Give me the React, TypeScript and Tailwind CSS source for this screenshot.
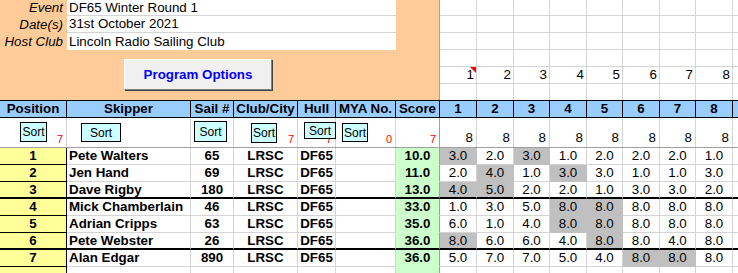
const META = [
  ["Event", "DF65 Winter Round 1"],
  ["Date(s)", "31st October 2021"],
  ["Host Club", "Lincoln Radio Sailing Club"],
];

const RACE_W = [
  "w-[37px]",
  "w-[37px]",
  "w-[36px]",
  "w-[37px]",
  "w-[36px]",
  "w-[37px]",
  "w-[36px]",
  "w-[37px]",
];

const ROWS = [
  { pos: 1, name: "Pete Walters", sail: 65, score: "10.0", races: [3, 2, 3, 1, 2, 2, 2, 1], drops: [0, 2] },
  { pos: 2, name: "Jen Hand", sail: 69, score: "11.0", races: [2, 4, 1, 3, 3, 1, 1, 3], drops: [1, 3] },
  { pos: 3, name: "Dave Rigby", sail: 180, score: "13.0", races: [4, 5, 2, 2, 1, 3, 3, 2], drops: [0, 1] },
  { pos: 4, name: "Mick Chamberlain", sail: 46, score: "33.0", races: [1, 3, 5, 8, 8, 8, 8, 8], drops: [3, 4] },
  { pos: 5, name: "Adrian Cripps", sail: 63, score: "35.0", races: [6, 1, 4, 8, 8, 8, 8, 8], drops: [3, 4] },
  { pos: 6, name: "Pete Webster", sail: 26, score: "36.0", races: [8, 6, 6, 4, 8, 8, 4, 8], drops: [0, 4] },
  { pos: 7, name: "Alan Edgar", sail: 890, score: "36.0", races: [5, 7, 7, 5, 4, 8, 8, 8], drops: [5, 6] },
];

const TOP_H = ["h-[16px]", "h-[17px]", "h-[17px]", "h-[17px]", "h-[17px]", "h-[16px]"];

function bottom(thick: boolean, normal: string) {
  return thick ? "border-b-2 border-b-black" : `border-b ${normal}`;
}

function SortBtn({ cls, top }: { cls: string; top?: boolean }) {
  return (
    <div
      className={`absolute flex justify-center border border-black bg-[#ccffff] text-[12px] leading-[14px] text-black ${
        top ? "items-start pt-[1px]" : "items-center"
      } ${cls}`}
    >
      Sort
    </div>
  );
}

function DataRow({ r, thick }: { r: (typeof ROWS)[number]; thick: boolean }) {
  const cell = "flex h-full shrink-0 items-center border-r";
  return (
    <div className="flex h-[17px]">
      <div className={`${cell} w-[67px] justify-center bg-[#ffff99] font-bold border-r-black ${bottom(thick, "border-b-black")}`}>
        {r.pos}
      </div>
      <div className={`${cell} w-[124px] pl-[2px] font-bold border-r-[#d4d4d4] ${bottom(thick, "border-b-[#d4d4d4]")}`}>
        {r.name}
      </div>
      <div className={`${cell} w-[43px] justify-center font-bold border-r-[#d4d4d4] ${bottom(thick, "border-b-[#d4d4d4]")}`}>
        {r.sail}
      </div>
      <div className={`${cell} w-[64px] justify-center font-bold border-r-[#d4d4d4] ${bottom(thick, "border-b-[#d4d4d4]")}`}>
        LRSC
      </div>
      <div className={`${cell} w-[38px] justify-center font-bold border-r-[#d4d4d4] ${bottom(thick, "border-b-[#d4d4d4]")}`}>
        DF65
      </div>
      <div className={`${cell} w-[60px] border-r-[#d4d4d4] ${bottom(thick, "border-b-[#d4d4d4]")}`} />
      <div className={`${cell} w-[44px] justify-center bg-[#ccffcc] font-bold border-r-[#a0a0a0] ${bottom(thick, "border-b-[#ccffcc]")}`}>
        {r.score}
      </div>
      {r.races.map((v, i) => {
        const drop = r.drops.includes(i);
        return (
          <div
            key={i}
            className={`${cell} ${RACE_W[i]} justify-center ${
              drop
                ? `bg-[#c0c0c0] border-r-[#c0c0c0] ${bottom(thick, "border-b-[#c0c0c0]")}`
                : `border-r-[#d4d4d4] ${bottom(thick, "border-b-[#d4d4d4]")}`
            }`}
          >
            {v.toFixed(1)}
          </div>
        );
      })}
      <div className={`${cell} flex-1 border-r-0 ${bottom(thick, "border-b-[#d4d4d4]")}`} />
    </div>
  );
}

export default function App() {
  const hd = "flex h-full shrink-0 items-center justify-center border-r border-r-black";
  const sc = "relative flex h-full shrink-0 items-end justify-end border-r pr-[3px] pb-[2px] text-[11px] leading-[12px] text-[#ff0000]";
  return (
    <div className="h-[273px] w-[738px] overflow-hidden bg-white font-['Liberation_Sans',Arial,sans-serif] text-[13.33px] leading-none text-black">
      {/* sheet heading block */}
      <div className="flex h-[100px]">
        <div className="w-[440px] shrink-0 border-r border-r-[#a0a0a0] bg-[#ffcc99]">
          {META.map(([label, value], i) => (
            <div key={label} className={`flex ${i === 0 ? "h-[16px]" : "h-[17px]"}`}>
              <div className="flex w-[67px] shrink-0 items-center justify-end pr-[4px] italic">{label}</div>
              <div
                className={`flex w-[329px] shrink-0 items-center bg-white pl-[2px] ${
                  i < 2 ? "border-b border-b-[#d4d4d4]" : ""
                }`}
              >
                {value}
              </div>
            </div>
          ))}
          <div className="ml-[124px] mt-[9px] flex h-[31px] w-[148px] items-center justify-center border border-t-white border-l-white border-r-[#808080] border-b-[#808080] bg-[#f0f0f0] font-bold text-[#0000ff] shadow-[1px_1px_0_#404040]">
            Program Options
          </div>
        </div>
        <div className="flex-1">
          {TOP_H.map((h, ri) => (
            <div key={ri} className={`flex ${h} ${ri < 5 ? "border-b border-b-[#d4d4d4]" : ""}`}>
              {RACE_W.map((w, ci) => (
                <div
                  key={ci}
                  className={`relative flex h-full shrink-0 items-center justify-end border-r border-r-[#d4d4d4] pr-[2px] ${w}`}
                >
                  {ri === 4 ? ci + 1 : null}
                  {ri === 4 && ci === 0 ? (
                    <span className="absolute right-0 top-0 h-0 w-0 border-l-[6px] border-t-[6px] border-l-transparent border-t-[#ff0000]" />
                  ) : null}
                </div>
              ))}
              <div className="flex-1" />
            </div>
          ))}
        </div>
      </div>

      {/* column headings */}
      <div className="flex h-[18px] border-y border-black bg-[#99ccff] font-bold">
        <div className={`${hd} w-[67px]`}>Position</div>
        <div className={`${hd} w-[124px]`}>Skipper</div>
        <div className={`${hd} w-[43px]`}>Sail #</div>
        <div className={`${hd} w-[64px]`}>Club/City</div>
        <div className={`${hd} w-[38px]`}>Hull</div>
        <div className={`${hd} w-[60px]`}>MYA No.</div>
        <div className={`${hd} w-[44px]`}>Score</div>
        {RACE_W.map((w, i) => (
          <div key={i} className={`${hd} ${w}`}>
            {i + 1}
          </div>
        ))}
        <div className="flex-1" />
      </div>

      {/* sort buttons */}
      <div className="flex h-[30px] border-b border-b-[#a0a0a0]">
        <div className={`${sc} w-[67px] border-r-[#d4d4d4]`}>
          7
          <SortBtn cls="left-[20px] top-[4px] h-[20px] w-[27px]" />
        </div>
        <div className={`${sc} w-[124px] border-r-[#d4d4d4]`}>
          <SortBtn cls="left-[14px] top-[5px] h-[19px] w-[40px]" />
        </div>
        <div className={`${sc} w-[43px] border-r-[#d4d4d4]`}>
          <SortBtn cls="left-[3px] top-[3px] h-[21px] w-[33px]" />
        </div>
        <div className={`${sc} w-[64px] border-r-[#d4d4d4]`}>
          7
          <SortBtn cls="left-[17px] top-[5px] h-[20px] w-[26px]" />
        </div>
        <div className={`${sc} z-10 w-[38px] border-r-[#d4d4d4]`}>
          7
          <SortBtn top cls="left-[6px] top-[4px] h-[17px] w-[32px]" />
        </div>
        <div className={`${sc} w-[60px] border-r-[#d4d4d4]`}>
          0
          <SortBtn cls="left-[6px] top-[5px] h-[19px] w-[26px]" />
        </div>
        <div className={`${sc} w-[44px] border-r-[#a0a0a0]`}>7</div>
        {RACE_W.map((w, i) => (
          <div key={i} className={`${sc} ${w} border-r-[#d4d4d4] text-[13.33px] leading-[14px] text-black`}>
            8
          </div>
        ))}
        <div className="flex-1" />
      </div>

      {/* results */}
      {ROWS.map((r, i) => (
        <DataRow key={r.pos} r={r} thick={i === 2 || i === 5} />
      ))}
      <div className="flex h-[17px]">
        <div className="h-full w-[67px] shrink-0 border-r border-r-black bg-[#ffff99]" />
        <div className="h-full w-[124px] shrink-0 border-r border-r-[#d4d4d4]" />
        <div className="h-full w-[43px] shrink-0 border-r border-r-[#d4d4d4]" />
        <div className="h-full w-[64px] shrink-0 border-r border-r-[#d4d4d4]" />
        <div className="h-full w-[38px] shrink-0 border-r border-r-[#d4d4d4]" />
        <div className="h-full w-[60px] shrink-0 border-r border-r-[#d4d4d4]" />
        <div className="h-full w-[44px] shrink-0 border-r border-r-[#a0a0a0] bg-[#ccffcc]" />
        {RACE_W.map((w, i) => (
          <div key={i} className={`h-full shrink-0 border-r border-r-[#d4d4d4] ${w}`} />
        ))}
      </div>
    </div>
  );
}
